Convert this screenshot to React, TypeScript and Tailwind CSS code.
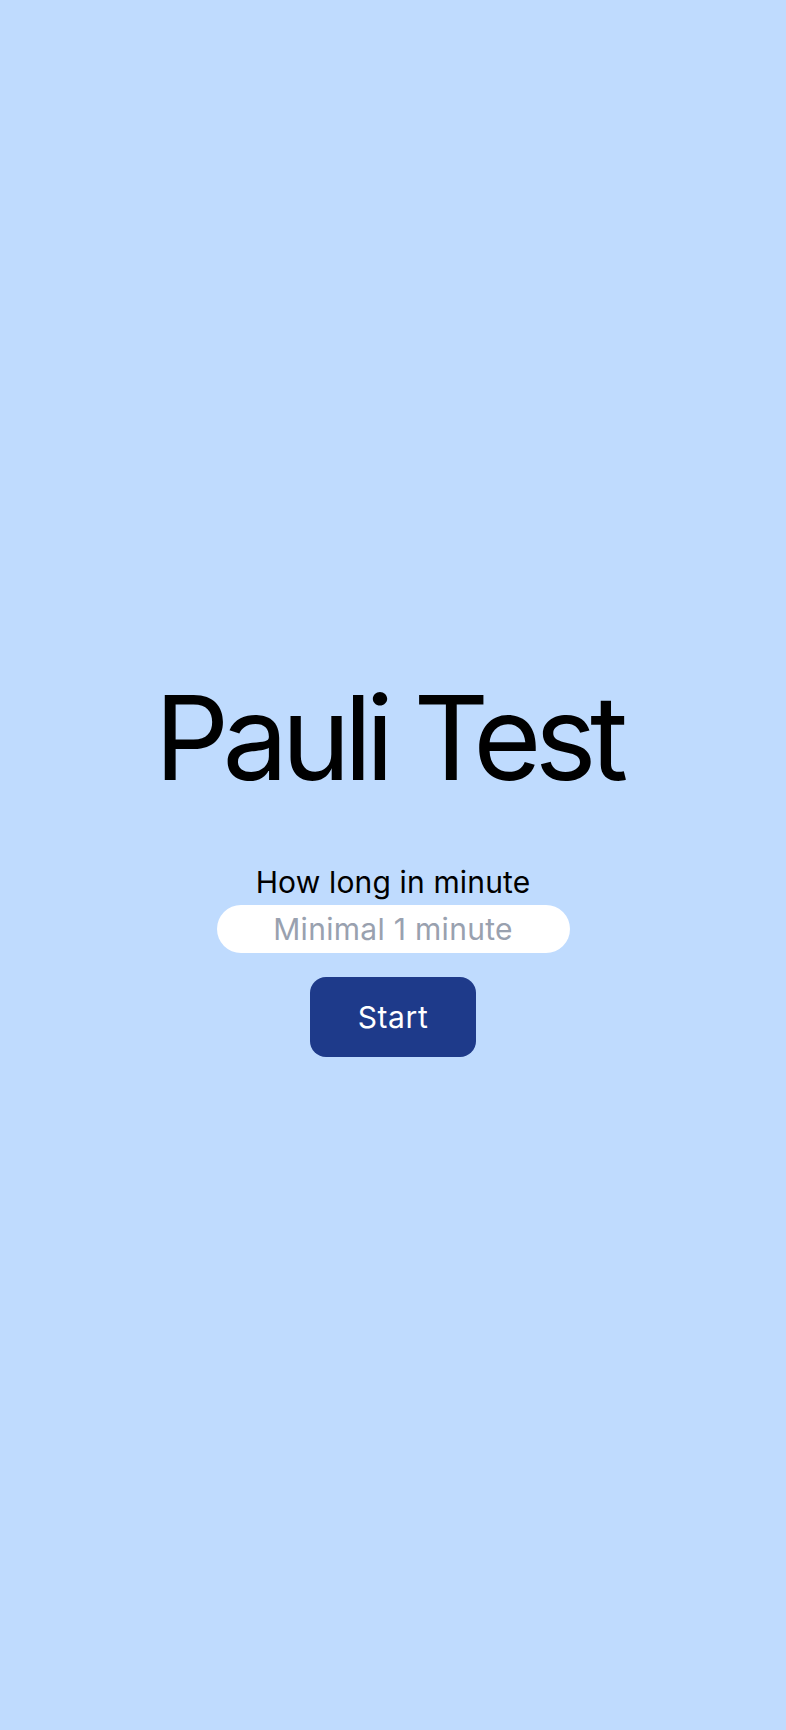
import React from "react";

export default function App() {
  return (
    <div
      className="min-h-screen w-full bg-[#bfdbfe] flex flex-col items-center justify-center"
      style={{ fontFamily: 'Inter, "Noto Sans", sans-serif' }}
    >
      <h1 className="mt-[6px] pr-[10px] text-[117px] leading-none text-black font-normal tracking-[-0.057em]">Pauli Test</h1>
      <div className="mt-[68px] flex flex-col items-center">
        <label className="text-[30px] leading-9 text-black tracking-[0.005em]">How long in minute</label>
        <input
          type="text"
          inputMode="numeric"
          placeholder="Minimal 1 minute"
          className="mt-[5px] w-[353px] h-[48px] rounded-full bg-white text-center text-[30px] text-black placeholder:text-gray-400 outline-none tracking-[0.01em]"
        />
        <button className="mt-6 w-[166px] h-[80px] rounded-2xl bg-[#1e3a8a] text-white text-[30px] tracking-[0.02em]">
          Start
        </button>
      </div>
    </div>
  );
}
